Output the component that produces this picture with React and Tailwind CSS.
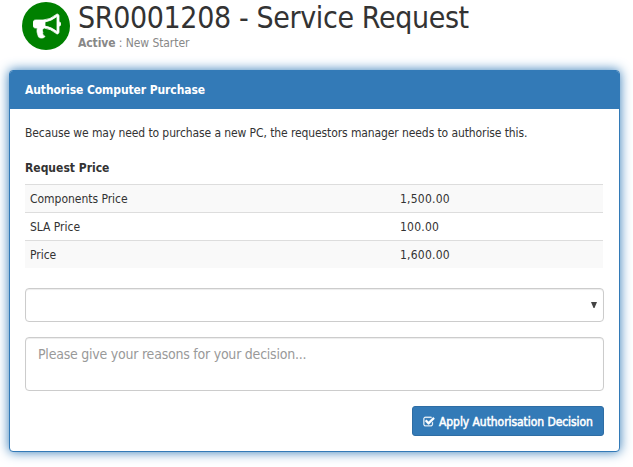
const rows = [
  ["Components Price", "1,500.00"],
  ["SLA Price", "100.00"],
  ["Price", "1,600.00"],
];

function Bullhorn() {
  return (
    <svg viewBox="0 0 1792 1792" className="ml-px h-7 w-7" fill="currentColor" stroke="currentColor" strokeWidth="50">
      <path d="M1664 640q53 0 90.500 37.500t37.500 90.500-37.500 90.500-90.500 37.500v384q0 52-38 90t-90 38q-417-347-812-380-58 19-91 66t-31 100.500 40 92.500q-20 33-23 65.500t6 58 33.500 55 48 50 61.500 50.500q-29 58-111.500 83t-168.500 11.500-132-55.500q-7-23-29.500-87.500t-32-94.500-23-89-15-101 3.500-98.500 22-110.500h-122q-66 0-113-47t-47-113v-192q0-66 47-113t113-47h480q435 0 896-384 52 0 90 38t38 90v384zm-128 604v-954q-394 302-768 343v270q377 42 768 341z" />
    </svg>
  );
}

function CheckSquare() {
  return (
    <svg viewBox="0 0 1792 1792" className="h-3 w-3 shrink-0" fill="currentColor" stroke="currentColor" strokeWidth="40">
      <path d="M1472 930v318q0 119-84.500 203.500t-203.500 84.500h-832q-119 0-203.500-84.500t-84.500-203.500v-832q0-119 84.500-203.500t203.500-84.500h832q63 0 117 25 15 7 18 23 3 17-9 29l-49 49q-10 10-23 10-3 0-9-2-23-6-45-6h-832q-66 0-113 47t-47 113v832q0 66 47 113t113 47h832q66 0 113-47t47-113v-254q0-13 9-22l64-64q10-10 23-10 6 0 12 3 20 8 20 29zm231-489l-814 814q-24 24-57 24t-57-24l-430-430q-24-24-24-57t24-57l110-110q24-24 57-24t57 24l263 263 647-647q24-24 57-24t57 24l110 110q24 24 24 57t-24 57z" />
    </svg>
  );
}

export default function App() {
  return (
    <div className="h-[467px] w-[633px] overflow-hidden bg-white font-['DejaVu_Sans_Condensed','DejaVu_Sans',sans-serif] text-[12px] leading-[18px] text-[#333]">
      <header className="flex h-[70px] pt-0.5 pl-[22px]">
        <div className="flex h-12 w-12 items-center justify-center rounded-full bg-[#008000] text-white">
          <Bullhorn />
        </div>
        <div className="pl-2">
          <h1 className="h-8 text-[30px] leading-[32px] tracking-[-0.37px] whitespace-nowrap">SR0001208 - Service Request</h1>
          <p className="tracking-[-0.08px] text-[#888] whitespace-nowrap">
            <b>Active</b> : New Starter
          </p>
        </div>
      </header>

      <section className="ml-[9px] h-[382px] w-[611px] rounded-[4px] border border-[#337ab7] bg-white shadow-[0_0_12px_#337ab7]">
        <h2 className="flex h-[38px] items-center rounded-t-[3px] bg-[#337ab7] pl-[15px] font-bold tracking-[-0.09px] whitespace-nowrap text-white">
          Authorise Computer Purchase
        </h2>
        <div className="pr-[15px] pl-[15px]">
          <p className="pt-[15px] tracking-[-0.1px] whitespace-nowrap">
            Because we may need to purchase a new PC, the requestors manager needs to authorise this.
          </p>
          <h3 className="pt-[17px] pb-[7px] font-bold">Request Price</h3>
          <div className="mr-px">
            {rows.map(([name, value]) => (
              <div key={name} className="flex h-7 items-center border-t border-[#ddd] pl-[5px] odd:bg-[#f9f9f9]">
                <span className="w-[370px] tracking-[-0.03px]">{name}</span>
                <span className="tracking-[0.22px]">{value}</span>
              </div>
            ))}
          </div>
          <div className="mt-5 flex h-[34px] items-center justify-end rounded-[4px] border border-[#ccc] pr-1.5 shadow-[inset_0_1px_1px_rgba(0,0,0,0.075)]">
            <svg viewBox="0 0 6 6" className="h-1.5 w-1.5" fill="#444">
              <path d="M0 0h6L3.500 6h-1z" />
            </svg>
          </div>
          <div className="mt-[15px] h-[54px] rounded-[4px] border border-[#ccc] px-3 pt-[6px] text-[14px] leading-[20px] tracking-[-0.23px] text-[#999] shadow-[inset_0_1px_1px_rgba(0,0,0,0.075)]">
            Please give your reasons for your decision...
          </div>
          <div className="mt-[15px] flex justify-end">
            <button className="flex h-[30px] w-[192px] items-center gap-1 rounded-[3px] border border-[#2e6da4] bg-[#337ab7] pt-0.5 pl-2.5 whitespace-nowrap text-white">
              <CheckSquare />
              <span className="tracking-[-0.06px] [-webkit-text-stroke:0.5px_white]">Apply Authorisation Decision</span>
            </button>
          </div>
        </div>
      </section>
    </div>
  );
}
